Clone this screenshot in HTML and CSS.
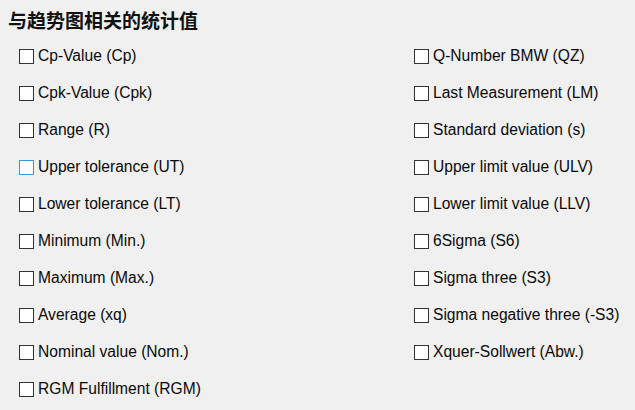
FILE: index.html
```html
<!DOCTYPE html>
<html>
<head>
<meta charset="utf-8">
<link rel="stylesheet" href="styles.css">
</head>
<body>
<div class="panel">
  <h1 class="title">与趋势图相关的统计值</h1>
  <div class="grid">
    <label class="item"><span class="box"></span>Cp-Value (Cp)</label>
    <label class="item"><span class="box"></span>Q-Number BMW (QZ)</label>
    <label class="item"><span class="box"></span>Cpk-Value (Cpk)</label>
    <label class="item"><span class="box"></span>Last Measurement (LM)</label>
    <label class="item"><span class="box"></span>Range (R)</label>
    <label class="item"><span class="box"></span>Standard deviation (s)</label>
    <label class="item"><span class="box hover"></span>Upper tolerance (UT)</label>
    <label class="item"><span class="box"></span>Upper limit value (ULV)</label>
    <label class="item"><span class="box"></span>Lower tolerance (LT)</label>
    <label class="item"><span class="box"></span>Lower limit value (LLV)</label>
    <label class="item"><span class="box"></span>Minimum (Min.)</label>
    <label class="item"><span class="box"></span>6Sigma (S6)</label>
    <label class="item"><span class="box"></span>Maximum (Max.)</label>
    <label class="item"><span class="box"></span>Sigma three (S3)</label>
    <label class="item"><span class="box"></span>Average (xq)</label>
    <label class="item"><span class="box"></span>Sigma negative three (-S3)</label>
    <label class="item"><span class="box"></span>Nominal value (Nom.)</label>
    <label class="item"><span class="box"></span>Xquer-Sollwert (Abw.)</label>
    <label class="item"><span class="box"></span>RGM Fulfillment (RGM)</label>
  </div>
</div>
</body>
</html>
```
FILE: styles.css
```css
html, body {
  margin: 0;
  padding: 0;
  background: #f0f0f0;
}
.panel {
  width: 635px;
  height: 410px;
  box-sizing: border-box;
  padding: 8px 0 0 8px;
  font-family: "Liberation Sans", Arial, sans-serif;
  color: #000;
}
.title {
  margin: 0;
  font-family: "Noto Sans CJK SC", sans-serif;
  font-size: 19px;
  font-weight: bold;
  line-height: 24px;
  color: #111;
}
.grid {
  display: grid;
  grid-template-columns: 395px 1fr;
  grid-auto-rows: 37px;
  margin: 13px 0 0 11px;
}
.item {
  display: flex;
  align-items: center;
  font-size: 15.6px;
  height: 22px;
  color: #0a0a0a;
}
.box {
  width: 13px;
  height: 13px;
  border: 1px solid #333;
  background: #fff;
  margin-right: 4px;
  flex: none;
}
.box.hover {
  border-color: #3a95d8;
}
```
